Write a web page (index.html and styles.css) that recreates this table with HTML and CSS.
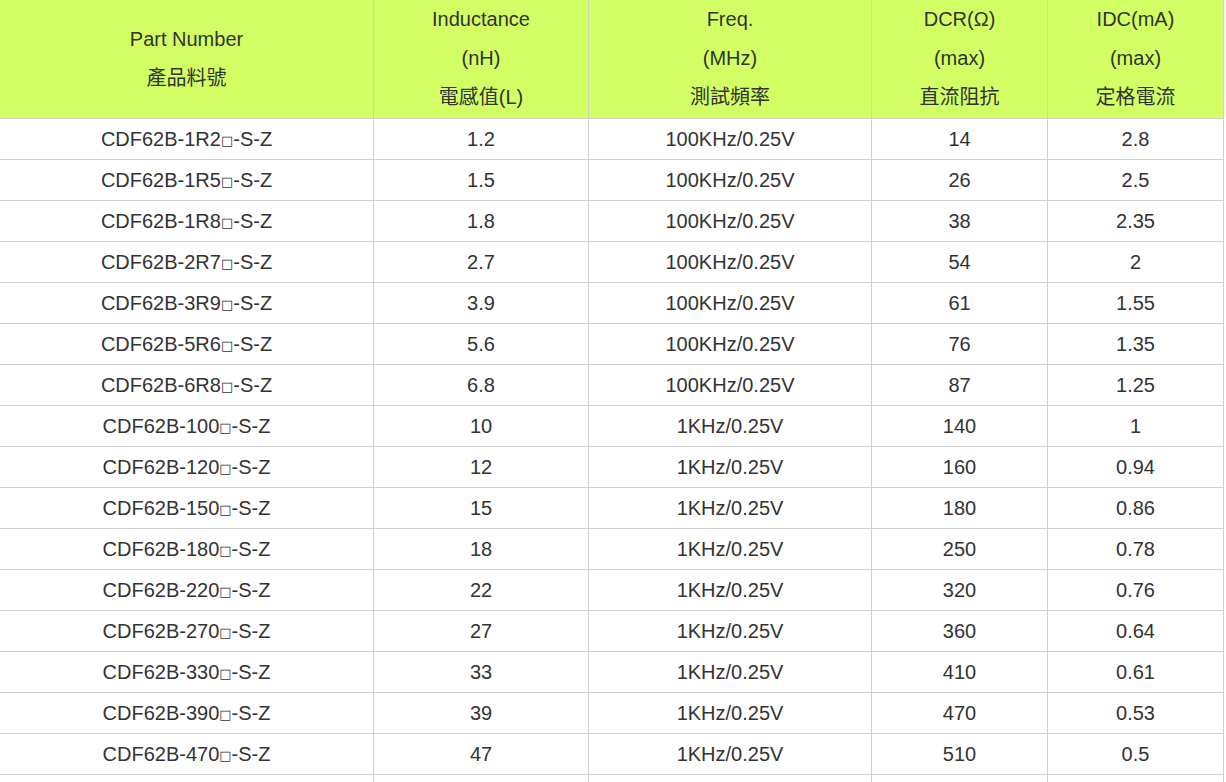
FILE: index.html
```html
<!DOCTYPE html>
<html lang="zh-Hant">
<head>
<meta charset="utf-8">
<title>CDF62B</title>
<link rel="stylesheet" href="styles.css">
</head>
<body>
<table class="spec">
  <colgroup>
    <col class="c1"><col class="c2"><col class="c3"><col class="c4"><col class="c5">
  </colgroup>
  <thead>
    <tr>
      <th><div class="hl">Part Number</div><div class="hl">產品料號</div></th>
      <th><div class="hl">Inductance</div><div class="hl">(nH)</div><div class="hl">電感值(L)</div></th>
      <th><div class="hl">Freq.</div><div class="hl">(MHz)</div><div class="hl">測試頻率</div></th>
      <th><div class="hl">DCR(Ω)</div><div class="hl">(max)</div><div class="hl">直流阻抗</div></th>
      <th><div class="hl">IDC(mA)</div><div class="hl">(max)</div><div class="hl">定格電流</div></th>
    </tr>
  </thead>
  <tbody>
    <tr><td>CDF62B-1R2<span class="box">□</span>-S-Z</td><td>1.2</td><td>100KHz/0.25V</td><td>14</td><td>2.8</td></tr>
    <tr><td>CDF62B-1R5<span class="box">□</span>-S-Z</td><td>1.5</td><td>100KHz/0.25V</td><td>26</td><td>2.5</td></tr>
    <tr><td>CDF62B-1R8<span class="box">□</span>-S-Z</td><td>1.8</td><td>100KHz/0.25V</td><td>38</td><td>2.35</td></tr>
    <tr><td>CDF62B-2R7<span class="box">□</span>-S-Z</td><td>2.7</td><td>100KHz/0.25V</td><td>54</td><td>2</td></tr>
    <tr><td>CDF62B-3R9<span class="box">□</span>-S-Z</td><td>3.9</td><td>100KHz/0.25V</td><td>61</td><td>1.55</td></tr>
    <tr><td>CDF62B-5R6<span class="box">□</span>-S-Z</td><td>5.6</td><td>100KHz/0.25V</td><td>76</td><td>1.35</td></tr>
    <tr><td>CDF62B-6R8<span class="box">□</span>-S-Z</td><td>6.8</td><td>100KHz/0.25V</td><td>87</td><td>1.25</td></tr>
    <tr><td>CDF62B-100<span class="box">□</span>-S-Z</td><td>10</td><td>1KHz/0.25V</td><td>140</td><td>1</td></tr>
    <tr><td>CDF62B-120<span class="box">□</span>-S-Z</td><td>12</td><td>1KHz/0.25V</td><td>160</td><td>0.94</td></tr>
    <tr><td>CDF62B-150<span class="box">□</span>-S-Z</td><td>15</td><td>1KHz/0.25V</td><td>180</td><td>0.86</td></tr>
    <tr><td>CDF62B-180<span class="box">□</span>-S-Z</td><td>18</td><td>1KHz/0.25V</td><td>250</td><td>0.78</td></tr>
    <tr><td>CDF62B-220<span class="box">□</span>-S-Z</td><td>22</td><td>1KHz/0.25V</td><td>320</td><td>0.76</td></tr>
    <tr><td>CDF62B-270<span class="box">□</span>-S-Z</td><td>27</td><td>1KHz/0.25V</td><td>360</td><td>0.64</td></tr>
    <tr><td>CDF62B-330<span class="box">□</span>-S-Z</td><td>33</td><td>1KHz/0.25V</td><td>410</td><td>0.61</td></tr>
    <tr><td>CDF62B-390<span class="box">□</span>-S-Z</td><td>39</td><td>1KHz/0.25V</td><td>470</td><td>0.53</td></tr>
    <tr><td>CDF62B-470<span class="box">□</span>-S-Z</td><td>47</td><td>1KHz/0.25V</td><td>510</td><td>0.5</td></tr>
    <tr class="tail"><td></td><td></td><td></td><td></td><td></td></tr>
  </tbody>
</table>
</body>
</html>
```
FILE: styles.css
```css
html, body {
  margin: 0;
  padding: 0;
  background: #ffffff;
}
body {
  font-family: "Liberation Sans", Arial, "Noto Sans CJK TC", sans-serif;
  color: #333333;
  font-size: 20px;
  overflow: hidden;
}
.spec {
  border-collapse: collapse;
  table-layout: fixed;
  width: 1224px;
  margin: -1px 0 0 -1px;
}
.c1 { width: 374px; }
.c2 { width: 215px; }
.c3 { width: 283px; }
.c4 { width: 176px; }
.c5 { width: 176px; }
.spec th,
.spec td {
  border: 1px solid #d0d0d0;
  text-align: center;
  vertical-align: middle;
  padding: 0;
}
.spec th {
  background: #d2ff64;
  font-weight: normal;
  height: 117px;
  padding-bottom: 1px;
}
.hl {
  line-height: 39px;
}
.spec td {
  height: 40px;
  line-height: 20px;
}
.box {
  font-family: "DejaVu Sans", sans-serif;
  font-size: 13px;
  line-height: 1;
  vertical-align: 1px;
}
```
